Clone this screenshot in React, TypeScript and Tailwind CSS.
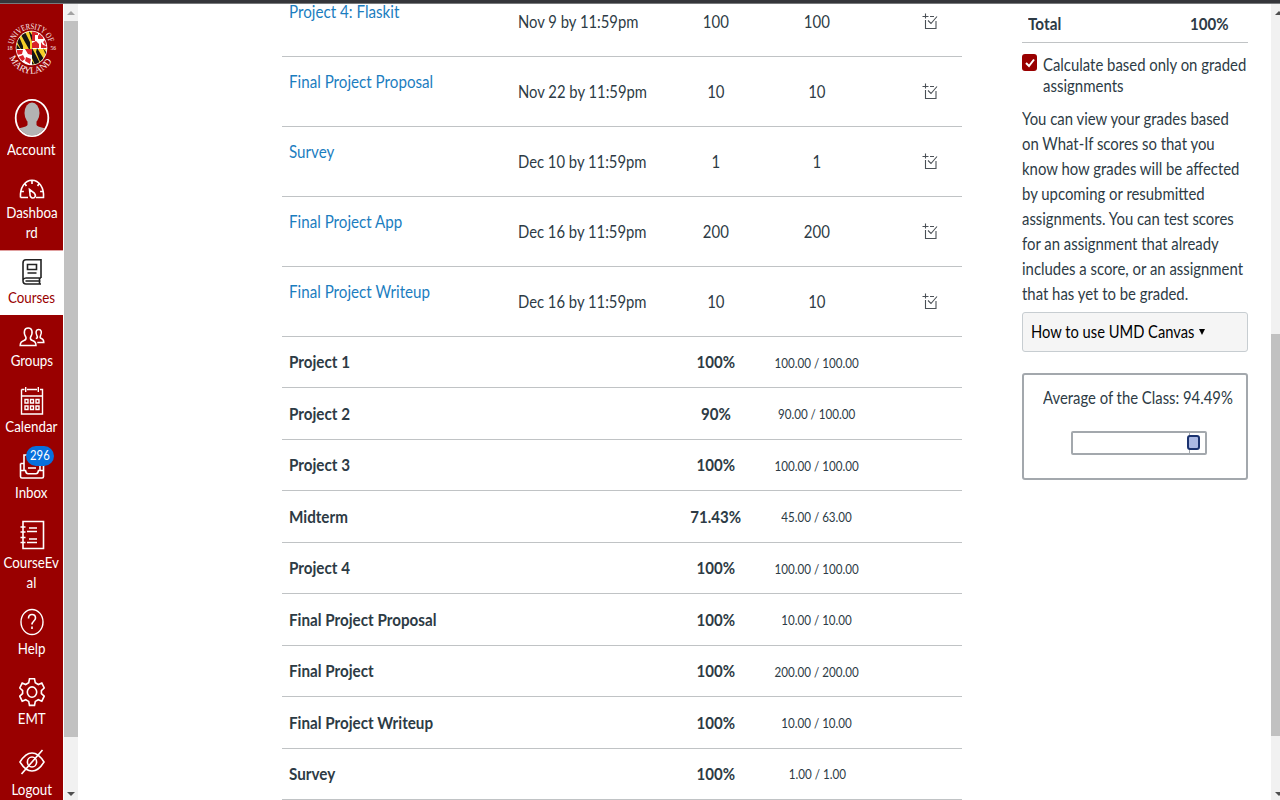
import type { ReactNode } from "react";

type TextProps = { children: ReactNode; className?: string };

function T({ children, className = "origin-left scale-x-[0.9]" }: TextProps) {
  return <span className={`inline-block whitespace-nowrap ${className}`}>{children}</span>;
}

function Crest() {
  return (
    <svg viewBox="0 0 64 64" className="h-16 w-16 overflow-visible" fill="none">
      <defs>
        <clipPath id="disc"><ellipse cx="31.500" cy="32" rx="15" ry="16.500" /></clipPath>
        <path id="arcTop" d="M13.400 28.500 A18.500 19.500 0 0 1 49.600 28.500" />
        <path id="arcBottom" d="M9.500 41.500 A23.500 25 0 0 0 53.500 41.500" />
      </defs>
      <ellipse cx="31.500" cy="32" rx="15.800" ry="17.200" fill="#fff" />
      <g clipPath="url(#disc)">
        <path fill="#f5cf28" d="M15 14h17v19H15zM32 33h17v18H32z" />
        <path fill="#151515" d="M18 18l5 12v7l-7-13zM23 12l7 14v9l-9-16zM28 13l6 9v10zM15 26l6 8h-6zM32 32l9 17h-6l-3-7zM37 32l10 16h-6l-5-12zM43 32l6 8v7zM32 45l4 6h-4z" />
        <path fill="#fff" d="M32 14h17v18H32zM15 33h17v18H15z" />
        <path fill="#d9222a" d="M32 15h6v4h-3v6h-3zM40 17l5 3-2 3h-5v-3zM46 23l3 5-4 1-2-3zM32 27l4-2 3 3v4h-7zM41 26l2 3 4 1v2h-6zM25 33h7v6l-4-1zM16 34h7l-1 4-5 1zM18 41l5-2 2 4-4 3zM26 41l5 2-1 5-5-3z" />
      </g>
      <g fill="#fdf0f0" fontFamily="Liberation Serif, serif">
        <text fontSize="8.500"><textPath href="#arcTop" textLength="49" lengthAdjust="spacingAndGlyphs">UNIVERSITY OF</textPath></text>
        <text fontSize="9.500"><textPath href="#arcBottom" textLength="54" lengthAdjust="spacingAndGlyphs">MARYLAND</textPath></text>
        <text x="7" y="34" fontSize="5.500">18</text>
        <text x="50.500" y="34" fontSize="5.500">56</text>
      </g>
    </svg>
  );
}

const stroke = { fill: "none", stroke: "currentColor", strokeWidth: 1.6 } as const;

const AccountIcon = () => (
  <svg viewBox="0 0 36 40" className="h-10 w-9">
    <defs><clipPath id="face"><ellipse cx="18" cy="20" rx="15.500" ry="17.500" /></clipPath></defs>
    <ellipse cx="18" cy="20" rx="16.300" ry="18.200" fill="#990000" stroke="#fff" strokeWidth="1.800" />
    <g clipPath="url(#face)" fill="#b3b3b3">
      <ellipse cx="18" cy="15" rx="7.500" ry="10.500" />
      <path d="M13.500 22v5c-1 2.500-9 2-11.500 6v7h32v-7c-2.500-4-10.500-3.500-11.500-6v-5z" />
    </g>
  </svg>
);
const DashboardIcon = () => (
  <svg viewBox="0 0 26 22" className="h-[22px] w-[26px]" {...stroke}>
    <path d="M1.500 19.500c-.7-10 4.500-17.300 11.500-17.300s12.200 7.300 11.500 17.300h-7.500M1.500 19.500h7.500M13 3v3M6.200 6l1.200 2M19.800 6l-1.200 2M2.300 13.500h2.600M21.100 13.500h2.600" />
    <path d="M10.500 11.500l4.800 3.500c2 2.500.8 5-1.300 5s-3.200-2-3-4z" />
  </svg>
);
const CoursesIcon = () => (
  <svg viewBox="0 0 22 28" className="h-7 w-[22px]" {...stroke}>
    <path d="M20 20V1.800H5C2.800 1.800 2 3 2 5v17.500c0 2.500 1 3.500 3 3.500h15M2 22c.5-1.500 1.500-2 3-2h15M4.500 23h15M18.500 20v6M6.500 6.500h9v5h-9zM6.500 15h9" />
  </svg>
);
const GroupsIcon = () => (
  <svg viewBox="0 0 26 22" className="h-[22px] w-[26px]" {...stroke} strokeWidth={1.500}>
    <path d="M7 11.500C3.800 6 5.500 2 9.200 2s5.400 4 2.200 9.500c-.3 2 .3 2.500 2 3 2.500.8 3.600 2.200 3.600 5H1.200c0-2.800 1.300-4.200 3.800-5 1.700-.5 2.300-1 2-3z" />
    <path d="M16.800 12.500c2-.5 1.800-1.500 1.200-2.500-2-4-.7-6.500 1.700-6.500s3.700 2.500 1.700 6.500c-.6 1.500-.3 2 1.100 2.500 1.600.6 2.300 1.500 2.300 4h-6.500" />
  </svg>
);
const CalendarIcon = () => (
  <svg viewBox="0 0 24 30" className="h-[30px] w-6" {...stroke} strokeWidth={1.400}>
    <path d="M1.500 3.500h3M7 3.500h10M20 3.500h2.500V28h-21V3.500M1.500 10h21M5.700 1v5M18.300 1v5" />
    <path d="M5 13.500h3v3.500H5zM10.500 13.500h3v3.500h-3zM16 13.500h3v3.500h-3zM5 20h3v3.500H5zM10.500 20h3v3.500h-3zM16 20h3v3.500h-3z" />
  </svg>
);
const InboxIcon = () => (
  <svg viewBox="0 0 26 28" className="h-7 w-[26px]" {...stroke}>
    <path d="M5 18V3h16v15M1.500 11.500v13c0 1 .5 1.500 1.500 1.500h20c1 0 1.500-.5 1.500-1.500v-13M1.500 18.500h5c.5 2.500 1 3.200 2.500 3.200h8c1.500 0 2-.7 2.500-3.200h5M5 11.500H1.500M21 11.500h3.500M9 16h8M9 9h8" />
  </svg>
);
const EvalIcon = () => (
  <svg viewBox="0 0 26 30" className="h-[30px] w-[26px]" {...stroke}>
    <path d="M4 1.500h20.500v27H4zM1.500 7h5M1.500 12h5M1.500 17.500h5M1.500 22.500h5M10 8h8M8 11.500h10M10 19h8M8 22.500h10" />
  </svg>
);
const HelpIcon = () => (
  <svg viewBox="0 0 24 28" className="h-7 w-6" {...stroke}>
    <ellipse cx="12" cy="14" rx="11" ry="12.500" strokeWidth="1.400" />
    <path d="M8.500 10.500c0-2.700 1.300-4 3.500-4s3.500 1.300 3.500 3.500c0 3-3.500 3-3.500 6.500M12 18.500v2.500" />
  </svg>
);
const GearIcon = () => (
  <svg viewBox="0 0 26 30" className="h-[30px] w-[26px]" {...stroke}>
    <path d="M10.500 1.800h5l.8 4 3 1.700 3.500-1.500 2.400 5-2.800 2.600v3l2.800 2.600-2.400 5-3.500-1.500-3 1.700-.8 4h-5l-.8-4-3-1.700-3.500 1.500-2.400-5 2.800-2.600v-3L.8 11l2.400-5 3.500 1.500 3-1.700z" />
    <ellipse cx="13" cy="15.100" rx="4.700" ry="5.200" />
  </svg>
);
const EyeOffIcon = () => (
  <svg viewBox="0 0 28 26" className="h-[26px] w-7" {...stroke}>
    <path d="M2 13C6 6.500 10 4 14 4s8 2.500 12 9c-4 6.500-8 9-12 9S6 19.500 2 13z" />
    <ellipse cx="14" cy="13" rx="4.600" ry="5" />
    <path d="M24.500 1L3.500 25" />
  </svg>
);

const nav = [
  { lines: ["Account"], icon: <AccountIcon />, item: "", box: "h-[44px]" },
  { lines: ["Dashboa", "rd"], icon: <DashboardIcon />, item: "pt-[15px]", box: "h-[28px]" },
  { lines: ["Courses"], icon: <CoursesIcon />, item: "mt-2 border-t border-[#e0a0a0] bg-white pt-1 pb-2 text-[#222]", box: "h-[32px]" },
  { lines: ["Groups"], icon: <GroupsIcon />, item: "pt-[7px]", box: "h-[28px]" },
  { lines: ["Calendar"], icon: <CalendarIcon />, item: "pt-3.5", box: "h-[32px]" },
  { lines: ["Inbox"], icon: <InboxIcon />, item: "pt-3", box: "h-[34px]", badge: "296" },
  { lines: ["CourseEv", "al"], icon: <EvalIcon />, item: "pt-3.5", box: "h-[36px]" },
  { lines: ["Help"], icon: <HelpIcon />, item: "pt-3", box: "h-[34px]" },
  { lines: ["EMT"], icon: <GearIcon />, item: "pt-4", box: "h-[34px]" },
  { lines: ["Logout"], icon: <EyeOffIcon />, item: "pt-[15px]", box: "h-[36px]" },
];

function Sidebar() {
  return (
    <nav className="flex w-[63px] shrink-0 flex-col bg-[#990000] text-white">
      <div className="flex h-[91px] shrink-0 items-start justify-center pt-3"><Crest /></div>
      {nav.map((n) => (
        <div key={n.lines[0]} className={`flex shrink-0 flex-col items-center ${n.item}`}>
          <div className={`relative flex items-center justify-center pt-0.5 ${n.box}`}>
            {n.icon}
            {n.badge && (
              <span className="absolute top-[-2px] left-[7px] flex h-5 w-7 items-center justify-center rounded-full bg-[#0770dd] text-[12.500px]">
                <T className="origin-center scale-x-[0.9]">{n.badge}</T>
              </span>
            )}
          </div>
          {n.lines.map((l) => (
            <div key={l} className={`flex h-5 items-center text-[15px] leading-5 ${n.lines[0] === "Courses" ? "text-[#990000]" : ""}`}>
              <T className="origin-center scale-x-[0.89]">{l}</T>
            </div>
          ))}
        </div>
      ))}
    </nav>
  );
}

const assignments = [
  ["Project 4: Flaskit", "Nov 9 by 11:59pm", "100"],
  ["Final Project Proposal", "Nov 22 by 11:59pm", "10"],
  ["Survey", "Dec 10 by 11:59pm", "1"],
  ["Final Project App", "Dec 16 by 11:59pm", "200"],
  ["Final Project Writeup", "Dec 16 by 11:59pm", "10"],
];

const groups = [
  ["Project 1", "100%", "100.00 / 100.00"],
  ["Project 2", "90%", "90.00 / 100.00"],
  ["Project 3", "100%", "100.00 / 100.00"],
  ["Midterm", "71.43%", "45.00 / 63.00"],
  ["Project 4", "100%", "100.00 / 100.00"],
  ["Final Project Proposal", "100%", "10.00 / 10.00"],
  ["Final Project", "100%", "200.00 / 200.00"],
  ["Final Project Writeup", "100%", "10.00 / 10.00"],
  ["Survey", "100%", "1.00 / 1.00"],
];

const RubricIcon = () => (
  <svg viewBox="0 0 16 16" className="h-4 w-4" fill="none" stroke="#4b5156" strokeWidth="1.100">
    <path d="M.5 3.500h6M3.500.5v5M8 3.500h4M3.500 7v8.500h10.500V8M6 7.500l3 3L15 3.500" />
  </svg>
);

function Grades() {
  return (
    <main className="w-[680px] shrink-0">
      <div className="-mt-[17px]">
        {assignments.map(([name, due, pts]) => (
          <div key={name} className="flex h-[70px] items-center border-b border-[#c0c3c5] pl-[7px] text-[17px]">
            <div className="-mt-[19px] w-[229px] text-[#1b7dbf]"><T className="origin-left scale-x-[0.892]">{name}</T></div>
            <div className="w-[148px]"><T className="origin-left scale-x-[0.871]">{due}</T></div>
            <div className="flex w-[101px] justify-center pr-px"><T className="origin-center scale-x-[0.88]">{pts}</T></div>
            <div className="flex w-[100px] justify-center"><T className="origin-center scale-x-[0.88]">{pts}</T></div>
            <div className="mb-0.5 ml-[55px]"><RubricIcon /></div>
          </div>
        ))}
      </div>
      <div>
        {groups.map(([name, pct, score]) => (
          <div key={name} className="flex h-[51.470px] items-center border-b border-[#c0c3c5] pl-[7px] text-[17px]">
            <div className="w-[377px] font-bold"><T className="origin-left scale-x-[0.895]">{name}</T></div>
            <div className="flex w-[101px] justify-center pr-px font-bold"><T className="origin-center scale-x-[0.885]">{pct}</T></div>
            <div className="flex w-[100px] justify-center text-[14px]"><T className="origin-center scale-x-[0.83]">{score}</T></div>
          </div>
        ))}
      </div>
    </main>
  );
}

const hint = [
  "You can view your grades based",
  "on What-If scores so that you",
  "know how grades will be affected",
  "by upcoming or resubmitted",
  "assignments. You can test scores",
  "for an assignment that already",
  "includes a score, or an assignment",
  "that has yet to be graded.",
];

function Aside() {
  return (
    <aside className="w-[226px] shrink-0 text-[17px]">
      <div className="flex h-[39px] items-center justify-between border-b border-[#c0c3c5] pt-px pr-[19px] pl-1.5 font-bold">
        <T>Total</T>
        <T className="origin-right scale-x-[0.885]">100%</T>
      </div>
      <div className="flex pt-[11px]">
        <span className="flex h-[17px] w-[15px] shrink-0 items-center justify-center rounded-[3px] bg-[#990000]">
          <svg viewBox="0 0 10 10" className="h-2.5 w-2.5" fill="none" stroke="#fff" strokeWidth="2"><path d="M1 5l3 3 5-6.500" /></svg>
        </span>
        <div className="ml-1.5 flex flex-col leading-[21px]">
          <T className="origin-left scale-x-[0.876]">Calculate based only on graded</T>
          <T className="origin-left scale-x-[0.882]">assignments</T>
        </div>
      </div>
      <div className="mt-2.5 flex flex-col leading-[25px]">
        {hint.map((l) => <T key={l} className="origin-left scale-x-[0.876]">{l}</T>)}
      </div>
      <button className="mt-[6px] flex h-10 w-full items-center rounded-[3px] border border-[#c7cdd1] bg-[#f5f5f5] pl-2 text-black">
        <span className="w-[168px] text-left"><T className="origin-left scale-x-[0.865]">How to use UMD Canvas</T></span>
        <svg viewBox="0 0 6 6" className="h-1.5 w-1.5" fill="#000"><path d="M0 0h6L3 6z" /></svg>
      </button>
      <div className="mt-[21px] h-[107px] rounded-[3px] border-2 border-[#a3a8ad] pt-2.5 pl-[19px]">
        <T className="origin-left scale-x-[0.873]">Average of the Class: 94.49%</T>
        <div className="mt-5 ml-7 flex h-6 w-[136px] items-center rounded-[2px] border-2 border-[#a3a8ad]">
          <div className="h-full w-[117px] border-r border-[#a3a8ad]" />
          <div className="-ml-[3px] h-[15px] w-[13px] rounded-[3px] border-2 border-[#1b3370] bg-[#abb9e3]" />
        </div>
      </div>
    </aside>
  );
}

export default function App() {
  return (
    <div className="flex h-[800px] w-[1280px] flex-col overflow-hidden bg-white font-['Lato',sans-serif] text-[#2d3b45]">
      <div className="h-1 shrink-0 border-b border-[#77797b] bg-[#35363a]" />
      <div className="flex min-h-0 flex-1">
        <Sidebar />
        <div className="flex w-[15px] shrink-0 flex-col items-center border-l border-[#fff] bg-[#f1f1f1]">
          <svg viewBox="0 0 8 4" className="mt-[7px] h-1 w-2 shrink-0" fill="#a3a3a3"><path d="M0 4h8L4 0z" /></svg>
          <div className="mt-1.5 h-[716px] w-full shrink-0 bg-[#c1c1c1]" />
          <svg viewBox="0 0 8 4" className="mt-[55px] h-1 w-2 shrink-0" fill="#505050"><path d="M0 0h8L4 4z" /></svg>
        </div>
        <div className="flex flex-1 overflow-hidden pl-[204px]">
          <Grades />
          <div className="w-[60px] shrink-0" />
          <Aside />
        </div>
        <div className="flex w-[9px] shrink-0 flex-col overflow-hidden bg-[#f1f1f1]">
          <svg viewBox="0 0 8 4" className="mt-[7px] ml-1 h-1 w-2 shrink-0" fill="#505050"><path d="M0 4h8L4 0z" /></svg>
          <div className="mt-[319px] h-[402px] w-full shrink-0 bg-[#c1c1c1]" />
          <svg viewBox="0 0 8 4" className="mt-14 ml-1 h-1 w-2 shrink-0" fill="#505050"><path d="M0 0h8L4 4z" /></svg>
        </div>
      </div>
    </div>
  );
}
